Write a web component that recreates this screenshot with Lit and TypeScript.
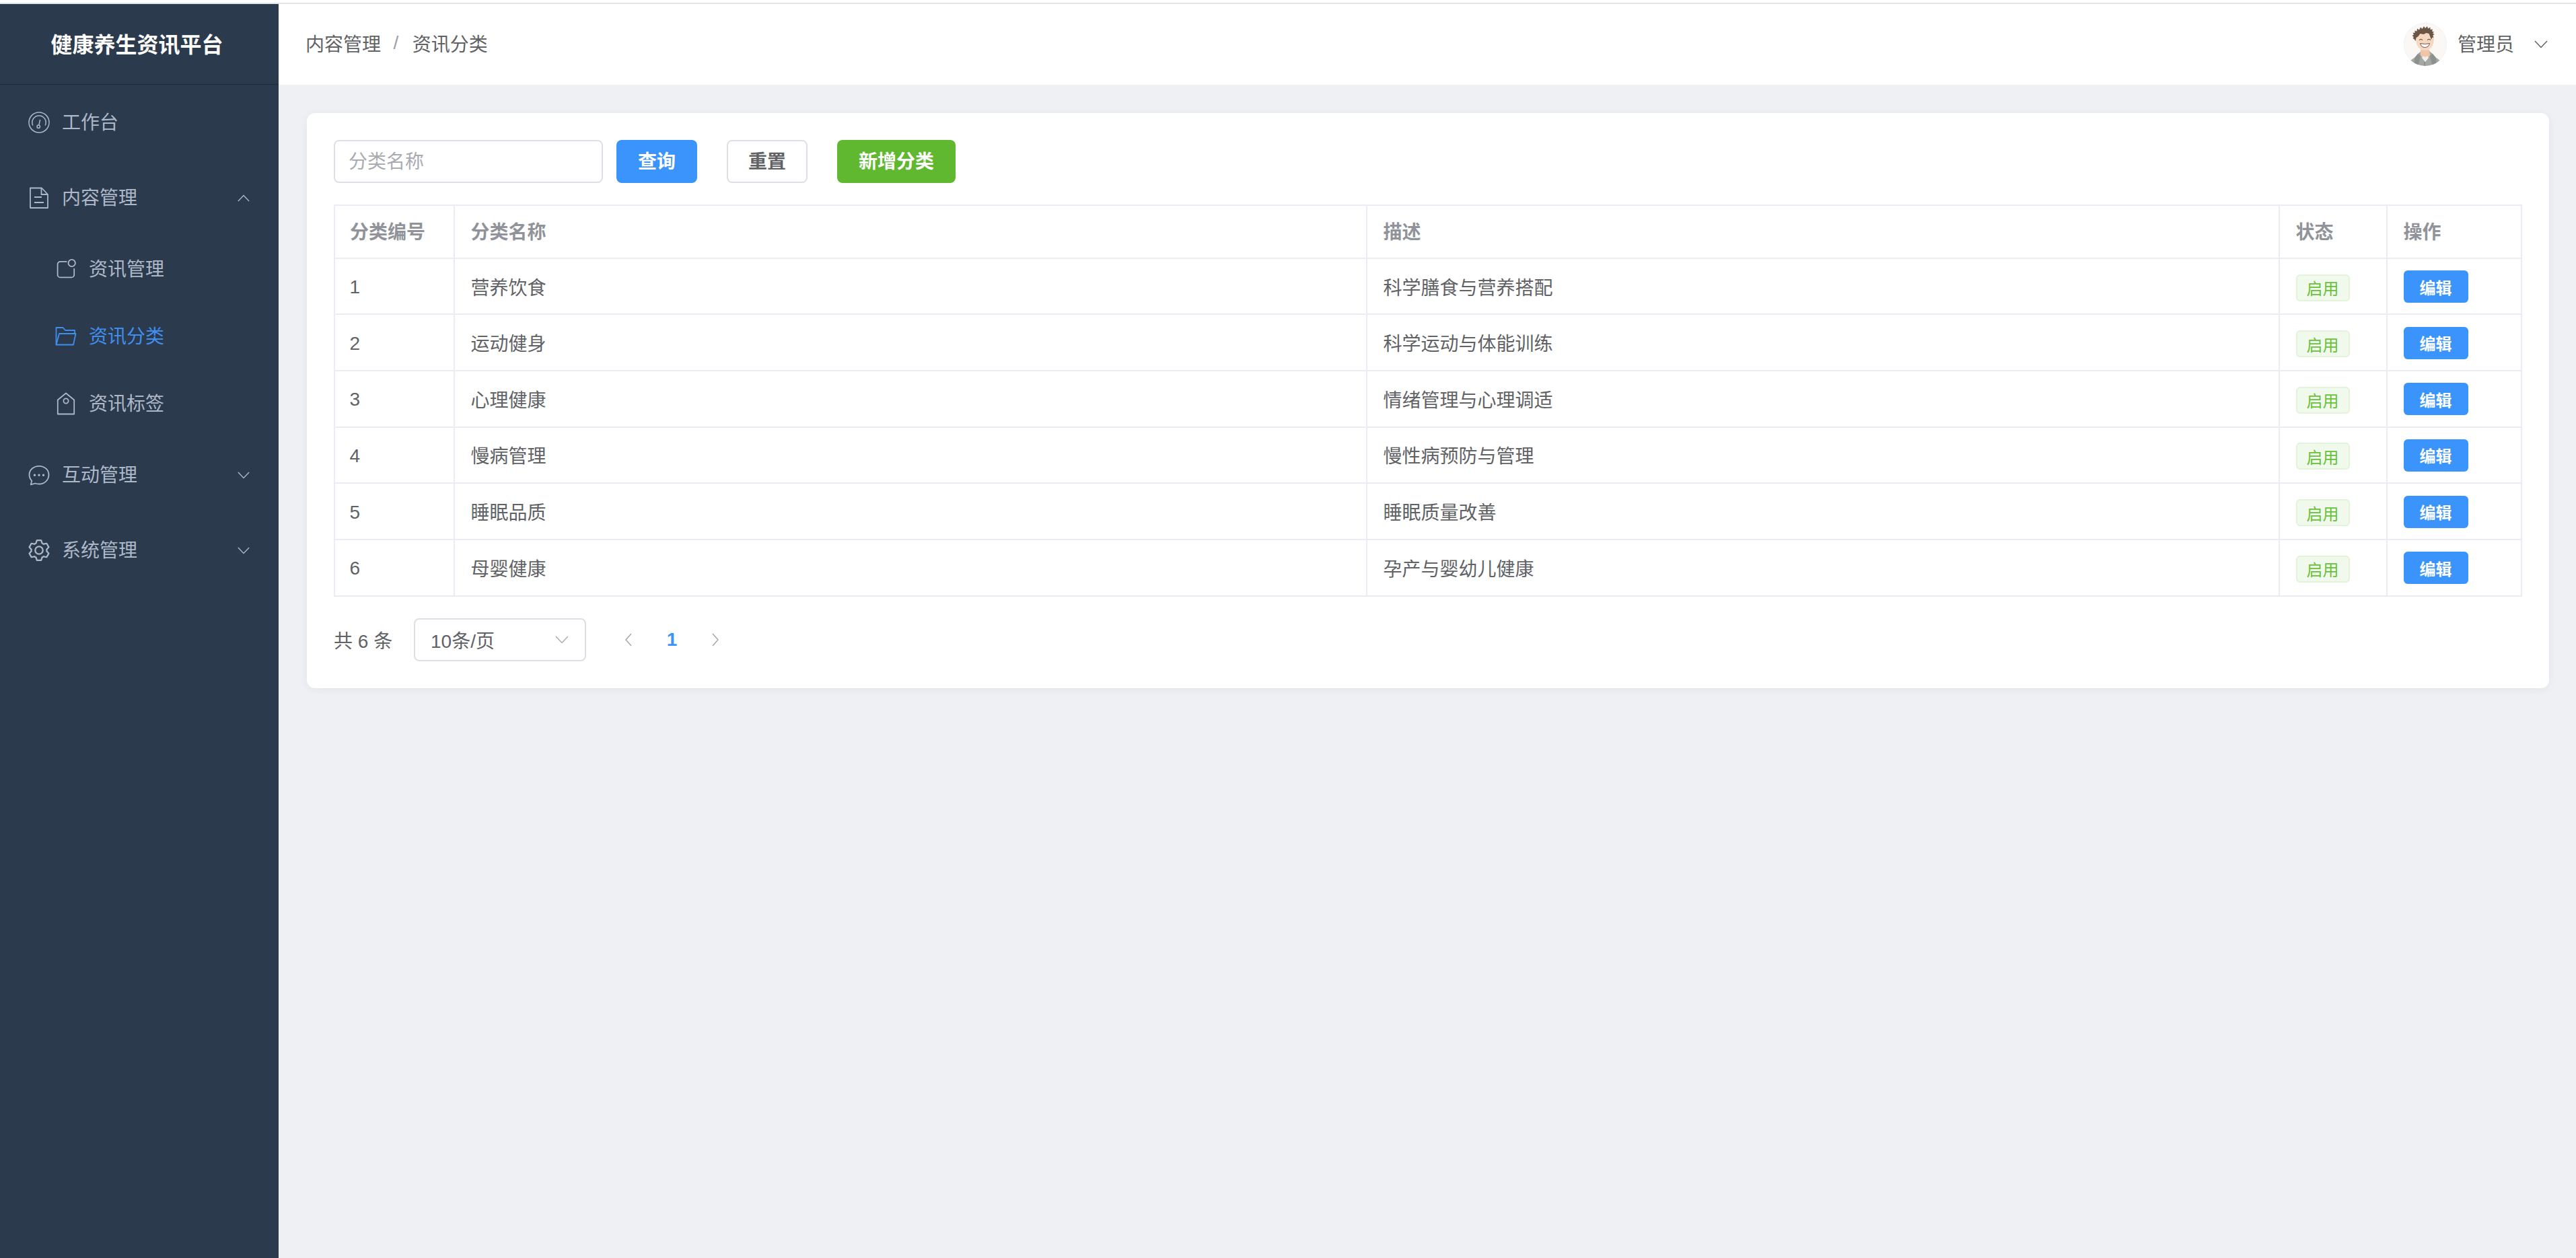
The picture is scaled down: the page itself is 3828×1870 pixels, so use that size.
import { LitElement, html, css, svg } from "lit";
import { customElement } from "lit/decorators.js";

const I = {
  gauge: svg`<g stroke-width="1.500"><circle cx="16" cy="16" r="15"/><path d="M6.800 20.500A10.200 10.200 0 1 1 25.200 20.500"/><circle cx="15.200" cy="22.300" r="2.200"/><path d="M15.800 20.200 17.600 12"/></g>`,
  doc: svg`<path d="M3 1.500h17l9 9.500v20H3z" stroke-linejoin="round"/><path d="M19.500 1.500v9.500H29"/><path d="M9 15h11M9 23h14"/>`,
  bell: svg`<path d="M17.500 4.900H7.600a4 4 0 0 0-4 4v15.500a4 4 0 0 0 4 4h16.600a4 4 0 0 0 4-4V15"/><circle cx="24.700" cy="7" r="5.200"/>`,
  folder: svg`<path d="M1.500 28.500V3h10l3.500 4h14v5" stroke-linejoin="round"/><path d="M1.500 28.500 6 12h24.500l-3.500 16.500z" stroke-linejoin="round"/>`,
  tag: svg`<path d="M3.800 10.500 16 .5l12.200 10V31.500H3.800z" stroke-linejoin="round"/><circle cx="16" cy="12" r="3.600"/>`,
  chat: svg`<path d="M16 2.800C8 2.800 1.500 8.400 1.500 15.800c0 3.400 1.500 6.600 3.800 9l-1.500 5.500 6.500-1.800c1.800.7 3.700 1 5.700 1 8 0 14.500-6 14.500-13.700S24 2.800 16 2.800z" stroke-linejoin="round"/><circle cx="9.500" cy="16.300" r=".8"/><circle cx="16" cy="16.300" r=".8"/><circle cx="22.500" cy="16.300" r=".8"/>`,
};

const gearPath =
  "M600.704 64a32 32 0 0 1 30.464 22.208l35.2 109.376c14.784 7.232 28.928 15.36 42.432 24.512l112.384-24.192a32 32 0 0 1 34.432 15.36L944.32 364.8a32 32 0 0 1-4.032 37.504l-77.12 85.12a357.12 357.12 0 0 1 0 49.024l77.12 85.248a32 32 0 0 1 4.032 37.504l-88.704 153.6a32 32 0 0 1-34.432 15.296L708.8 803.904c-13.44 9.088-27.648 17.28-42.368 24.512l-35.264 109.376A32 32 0 0 1 600.704 960H423.296a32 32 0 0 1-30.464-22.208L357.696 828.48a351.616 351.616 0 0 1-42.56-24.64l-112.32 24.256a32 32 0 0 1-34.432-15.36L79.68 659.2a32 32 0 0 1 4.032-37.504l77.12-85.248a357.12 357.12 0 0 1 0-48.896l-77.12-85.248A32 32 0 0 1 79.68 364.8l88.704-153.6a32 32 0 0 1 34.432-15.296l112.32 24.256c13.568-9.152 27.776-17.408 42.56-24.64l35.2-109.312A32 32 0 0 1 423.232 64H600.64zm-23.424 64H446.72l-36.352 113.088-24.512 11.968a294.113 294.113 0 0 0-34.816 20.096l-22.656 15.36-116.224-25.088-65.28 113.152 79.68 88.192-1.92 27.136a293.12 293.12 0 0 0 0 40.192l1.92 27.136-79.808 88.192 65.344 113.152 116.224-25.024 22.656 15.296a294.113 294.113 0 0 0 34.816 20.096l24.512 11.968L446.72 896h130.688l36.48-113.152 24.448-11.904a288.282 288.282 0 0 0 34.752-20.096l22.592-15.296 116.288 25.024 65.28-113.152-79.744-88.192 1.92-27.136a293.12 293.12 0 0 0 0-40.256l-1.92-27.136 79.808-88.128-65.344-113.152-116.288 24.96-22.592-15.232a287.616 287.616 0 0 0-34.752-20.096l-24.448-11.904L577.344 128zM512 320a192 192 0 1 1 0 384 192 192 0 0 1 0-384zm0 64a128 128 0 1 0 0 256 128 128 0 0 0 0-256z";

const icon = (body: unknown) => html`<svg class="ico" viewBox="0 0 32 32">${body}</svg>`;
const gear = html`<svg class="ico solid" viewBox="64 64 896 896"><path d="${gearPath}"/></svg>`;
const chev = (cls: string, up = false) =>
  html`<svg class="${cls}" viewBox="0 0 20 12"><path d="${up ? "M1 11 10 1.500l9 9.500" : "M1 1l9 9.500L19 1"}"/></svg>`;

const rows = [
  ["1", "营养饮食", "科学膳食与营养搭配"],
  ["2", "运动健身", "科学运动与体能训练"],
  ["3", "心理健康", "情绪管理与心理调适"],
  ["4", "慢病管理", "慢性病预防与管理"],
  ["5", "睡眠品质", "睡眠质量改善"],
  ["6", "母婴健康", "孕产与婴幼儿健康"],
];

@customElement("app-root")
export class AppRoot extends LitElement {
  static styles = css`
    :host {
      display: block;
      width: 3828px;
      height: 1870px;
      overflow: hidden;
      background: #fff;
      font-family: "Liberation Sans", "Noto Sans CJK SC", sans-serif;
      color: #606266;
    }
    .t { margin-bottom: 4px; }
    .strip { height: 4px; background: #fff; }
    .strip2 { height: 2px; background: #e4e4e4; }
    .app { display: flex; height: 1864px; }

    .side { width: 414px; flex: none; background: #2c3a4d; color: #adb8c9; }
    .logo {
      height: 119px;
      border-bottom: 1px solid #1f2b3a;
      display: flex;
      align-items: center;
      justify-content: center;
      padding-right: 7px;
      color: #fff;
      font-size: 32px;
      font-weight: 700;
    }
    .item {
      height: 112px;
      display: flex;
      align-items: center;
      padding: 0 42px;
      font-size: 28px;
    }
    .sub {
      height: 100px;
      display: flex;
      align-items: center;
      padding-left: 82px;
      font-size: 28px;
    }
    .sub.active { color: #3f8fee; }
    .ico {
      width: 32px;
      height: 32px;
      flex: none;
      margin-right: 18px;
      fill: none;
      stroke: currentColor;
      stroke-width: 1.800;
      overflow: visible;
    }
    .ico.solid { fill: currentColor; stroke: none; }
    .grow { flex: 1; }
    .arrow { width: 18px; height: 11px; fill: none; stroke: currentColor; stroke-width: 1.500; margin-right: 1px; }

    .main { flex: 1; min-width: 0; display: flex; flex-direction: column; background: #eef0f4; }
    .top {
      height: 120px;
      flex: none;
      background: #fff;
      display: flex;
      align-items: center;
      padding: 0 42px 0 40px;
      font-size: 28px;
    }
    .sep { margin: 0 20.500px 4px 18.500px; color: #9aa0a8; }
    .avatar { width: 64px; height: 64px; margin-right: 15.500px; flex: none; }
    .user { color: #606266; }
    .top .arrow { width: 20px; height: 12px; margin: 0 0 0 30px; stroke: #606266; }

    .card {
      margin: 42px 40px 0 42px;
      background: #fff;
      border-radius: 12px;
      box-shadow: 0 2px 12px rgba(40, 50, 80, 0.06);
      padding: 40px 41px 39.500px 40px;
    }
    .bar { display: flex; align-items: center; height: 64px; margin-bottom: 32px; }
    .input {
      width: 400px;
      height: 64px;
      box-sizing: border-box;
      border: 2px solid #dcdfe6;
      border-radius: 8px;
      display: flex;
      align-items: center;
      padding-left: 20px;
      font-size: 28px;
      color: #a8abb2;
      margin-right: 20px;
    }
    .btn {
      height: 64px;
      box-sizing: border-box;
      border-radius: 8px;
      display: flex;
      align-items: center;
      justify-content: center;
      font-size: 28px;
      font-weight: 700;
      flex: none;
    }
    .q { width: 120px; background: #3a94fb; color: #fff; margin-right: 44px; }
    .r { width: 120px; background: #fff; border: 2px solid #dcdfe6; color: #606266; margin-right: 44px; }
    .a { width: 176px; background: #5fb82f; color: #fff; }

    table {
      width: 3252px;
      border-collapse: separate;
      border-spacing: 0;
      table-layout: fixed;
      border-top: 2px solid #e9ecf3;
      border-left: 2px solid #e9ecf3;
      font-size: 28px;
    }
    th, td {
      padding: 0 0 0 23.500px;
      text-align: left;
      border-right: 2px solid #e9ecf3;
      border-bottom: 2px solid #e9ecf3;
      box-sizing: border-box;
    }
    th { height: 78.700px; color: #909399; font-weight: 700; padding-bottom: 3px; }
    th:first-child { padding-left: 22px; }
    td { height: 83.67px; color: #606266; }
    td:first-child { padding-left: 21.500px; padding-top: 3px; }
    .tag {
      display: inline-flex;
      align-items: center;
      justify-content: center;
      width: 80px;
      height: 40px;
      box-sizing: border-box;
      border: 2px solid #e1f3d8;
      background: #f0f9eb;
      color: #67c23a;
      border-radius: 6px;
      font-size: 24px;
      vertical-align: middle;
      position: relative;
      top: 2px;
    }
    .edit {
      display: inline-flex;
      align-items: center;
      justify-content: center;
      width: 96px;
      height: 48px;
      background: #3a94fb;
      color: #fff;
      border-radius: 6px;
      font-size: 24px;
      font-weight: 700;
      vertical-align: middle;
      position: relative;
      top: 0.500px;
    }

    .pager { display: flex; align-items: center; height: 64px; margin-top: 32.500px; font-size: 28px; }
    .total { width: 119px; flex: none; }
    .select {
      width: 256px;
      height: 64px;
      box-sizing: border-box;
      border: 2px solid #dcdfe6;
      border-radius: 8px;
      display: flex;
      align-items: center;
      padding: 0 24px 0 23px;
      margin-right: 58px;
    }
    .select .arrow { width: 20px; height: 12px; stroke: #a8abb2; margin: 0; }
    .pg { width: 10px; height: 20px; fill: none; stroke: #a0a3a8; stroke-width: 1.4; flex: none; }
    .cur { color: #3a94fb; font-weight: 700; width: 119px; text-align: center; flex: none; }
  `;

  render() {
    return html`
      <div class="strip"></div>
      <div class="strip2"></div>
      <div class="app">
        <aside class="side">
          <div class="logo"><span class="t">健康养生资讯平台</span></div>
          <div class="item">${icon(I.gauge)}<span class="t">工作台</span></div>
          <div class="item">${icon(I.doc)}<span class="grow t">内容管理</span>${chev("arrow", true)}</div>
          <div class="sub">${icon(I.bell)}<span class="t">资讯管理</span></div>
          <div class="sub active">${icon(I.folder)}<span class="t">资讯分类</span></div>
          <div class="sub">${icon(I.tag)}<span class="t">资讯标签</span></div>
          <div class="item">${icon(I.chat)}<span class="grow t">互动管理</span>${chev("arrow")}</div>
          <div class="item">${gear}<span class="grow t">系统管理</span>${chev("arrow")}</div>
        </aside>
        <div class="main">
          <header class="top">
            <span class="t">内容管理</span><span class="sep">/</span><span class="t">资讯分类</span>
            <span class="grow"></span>
            ${this.avatar()}
            <span class="user t">管理员</span>
            ${chev("arrow")}
          </header>
          <section class="card">
            <div class="bar">
              <div class="input"><span class="t">分类名称</span></div>
              <div class="btn q"><span class="t">查询</span></div>
              <div class="btn r"><span class="t">重置</span></div>
              <div class="btn a"><span class="t">新增分类</span></div>
            </div>
            <table>
              <colgroup>
                <col style="width:178px" /><col style="width:1356px" /><col style="width:1356px" />
                <col style="width:160px" /><col />
              </colgroup>
              <thead>
                <tr><th>分类编号</th><th>分类名称</th><th>描述</th><th>状态</th><th>操作</th></tr>
              </thead>
              <tbody>
                ${rows.map(
                  (r) => html`<tr>
                    <td>${r[0]}</td><td>${r[1]}</td><td>${r[2]}</td>
                    <td><span class="tag">启用</span></td>
                    <td><span class="edit">编辑</span></td>
                  </tr>`
                )}
              </tbody>
            </table>
            <div class="pager">
              <span class="total">共 6 条</span>
              <div class="select"><span class="grow">10条/页</span>${chev("arrow")}</div>
              <svg class="pg" viewBox="0 0 10 20"><path d="M9 1 1 10l8 9"/></svg>
              <span class="cur">1</span>
              <svg class="pg" viewBox="0 0 10 20"><path d="M1 1l8 9-8 9"/></svg>
            </div>
          </section>
        </div>
      </div>
    `;
  }

  avatar() {
    return html`<svg class="avatar" viewBox="0 0 64 64">
      <defs><clipPath id="av"><circle cx="32" cy="32" r="32"/></clipPath></defs>
      <circle cx="32" cy="32" r="31.700" fill="#faf7f5" stroke="#eeeae8" stroke-width=".6"/>
      <g clip-path="url(#av)">
        <path d="M7 64c1-6 4-10 9-12l5-6 5-4h12l5 4 5 6c5 2 7 6 8 12z" fill="#a2a7a2"/>
        <path d="M16 52l5-6 4 3-2 9-1 6h-6zM48 52l-5-6-4 3 2 9 1 6h6z" fill="#8c918d"/>
        <path d="M25 40h13l1 8-7 9-7-9z" fill="#eec5a6"/>
        <path d="M27 52l5 6 5-6-2-3-3 2-3-2z" fill="#f2efe9"/>
        <path d="M31 64v-6" stroke="#6b6f6c" stroke-width=".8"/>
        <path d="M18 24c0 9 5 17 13.500 17S45 33 45 24 40 12 31.500 12 18 15 18 24z" fill="#f6d8c0"/>
        <path d="M17.500 27l-2-3 -2-1 1.500-2-2.500-2 2.500-1.500-1.500-3 3 .5 0-3.500 3 1 .5-4 3 2 2-4 2.500 2.500 2.500-4 2 3 3-3 1 3.500 3.500-2 0 3.500 3.500-.5-1 3 3 1-2 2 2.500 1.500-2.500 2 1.500 2.500-2.500 .5-1 3-1.500-4-2-5-4-1-4 2-5-1-3 4-3 2z" fill="#6b5646"/>
        <path d="M23 25.500q2.500-2.500 5 0M35 25.500q2.500-2.500 5 0" fill="none" stroke="#3e3027" stroke-width="1"/>
        <path d="M24.500 30.500q7 2 14 0q-1.500 6-7 6t-7-6z" fill="#fff" stroke="#6e4234" stroke-width=".9"/>
      </g>
    </svg>`;
  }
}
